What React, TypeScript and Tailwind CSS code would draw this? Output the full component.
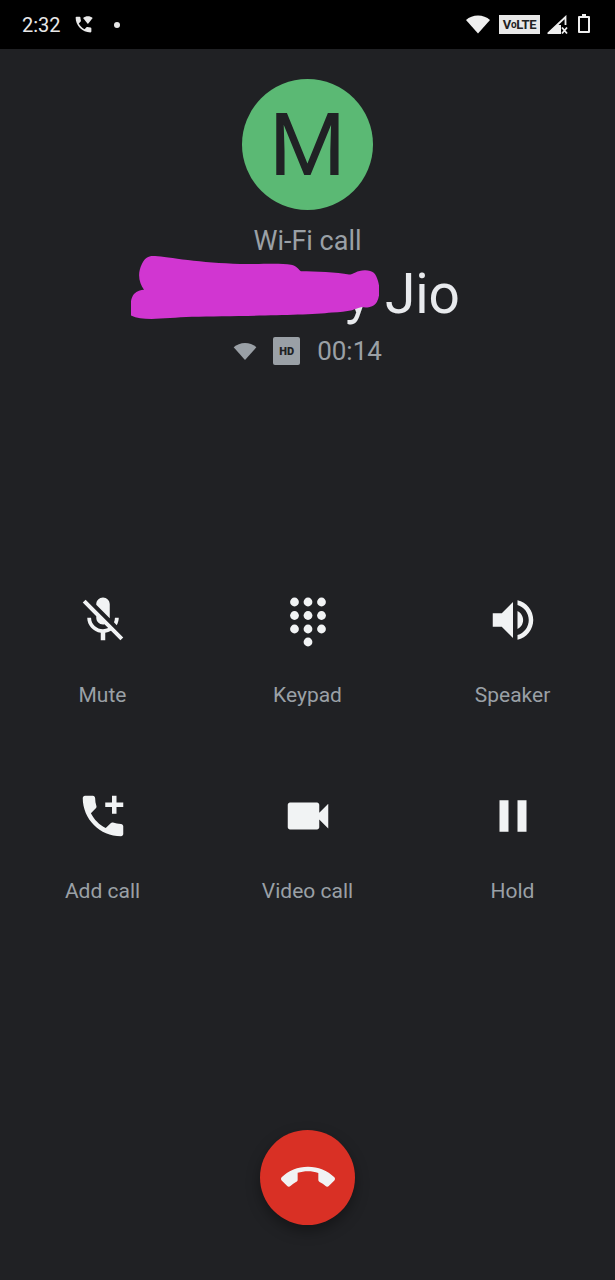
import React from 'react';

const font = "font-['Roboto',sans-serif]";

const MicOff = () => (
  <svg viewBox="0 0 24 24" className="h-[54px] w-[54px] fill-[#f1f3f4]">
    <path d="M19 11h-1.700c0 .74-.16 1.430-.43 2.050l1.230 1.230c.56-.98.9-2.090.9-3.280zm-4.020.17c0-.06.02-.11.02-.17V5c0-1.660-1.340-3-3-3S9 3.340 9 5v.18l5.980 5.990zM4.270 3L3 4.270l6.010 6.010V11c0 1.660 1.330 3 2.990 3 .22 0 .44-.03.65-.08l1.660 1.660c-.71.33-1.500.52-2.310.52-2.760 0-5.300-2.100-5.300-5.100H5c0 3.410 2.720 6.230 6 6.720V21h2v-3.280c.91-.13 1.770-.45 2.540-.9L19.730 21 21 19.730 4.270 3z" />
  </svg>
);

const Dialpad = () => (
  <svg viewBox="0 0 54 54" className="h-[54px] w-[54px] fill-[#f1f3f4]">
    {[9, 22.5, 36].map((y) =>
      [13.5, 27, 40.5].map((x) => <circle key={`${x}-${y}`} cx={x} cy={y} r="4.4" />),
    )}
    <circle cx="27" cy="49" r="4.4" />
  </svg>
);

const Speaker = () => (
  <svg viewBox="0 0 24 24" className="h-[54px] w-[54px] fill-[#f1f3f4]">
    <path d="M3 9v6h4l5 5V4L7 9H3zm13.500 3c0-1.770-1.020-3.290-2.500-4.030v8.050c1.480-.73 2.500-2.250 2.500-4.020zM14 3.230v2.060c2.890.86 5 3.540 5 6.710s-2.110 5.850-5 6.710v2.060c4.010-.91 7-4.490 7-8.770s-2.990-7.860-7-8.770z" />
  </svg>
);

const AddCall = () => (
  <svg viewBox="0 0 24 24" className="h-[54px] w-[54px] fill-[#f1f3f4]">
    <path d="M20 15.500c-1.250 0-2.450-.2-3.570-.57-.35-.11-.74-.03-1.020.24l-2.200 2.200c-2.830-1.440-5.150-3.750-6.590-6.590l2.200-2.210c.28-.26.36-.65.25-1C8.700 6.450 8.500 5.250 8.500 4c0-.55-.45-1-1-1H4c-.55 0-1 .45-1 1 0 9.390 7.610 17 17 17 .55 0 1-.45 1-1v-3.500c0-.55-.45-1-1-1zM21 6h-3V3h-2v3h-3v2h3v3h2V8h3z" />
  </svg>
);

const Videocam = () => (
  <svg viewBox="0 0 24 24" className="h-[54px] w-[54px] fill-[#f1f3f4]">
    <path d="M17 10.500V7c0-.55-.45-1-1-1H4c-.55 0-1 .45-1 1v10c0 .55.45 1 1 1h12c.55 0 1-.45 1-1v-3.500l4 4v-11l-4 4z" />
  </svg>
);

const Pause = () => (
  <svg viewBox="0 0 24 24" className="h-[54px] w-[54px] fill-[#f1f3f4]">
    <path d="M6 19h4V5H6v14zm8-14v14h4V5h-4z" />
  </svg>
);

const actions = [
  { label: 'Mute', icon: <MicOff /> },
  { label: 'Keypad', icon: <Dialpad /> },
  { label: 'Speaker', icon: <Speaker /> },
  { label: 'Add call', icon: <AddCall /> },
  { label: 'Video call', icon: <Videocam /> },
  { label: 'Hold', icon: <Pause /> },
];

const StatusBar = () => (
  <div className={`flex h-[49px] shrink-0 items-center justify-between bg-black pl-[22px] pr-[25px] ${font}`}>
    <div className="flex items-center">
      <span className="text-[20px] leading-none text-[#e8e8e8]">2:32</span>
      <svg viewBox="0 0 24 24" className="ml-[12px] h-[21px] w-[21px] fill-[#e8e8e8]">
        <path d="M20 15.500c-1.250 0-2.450-.2-3.570-.57-.35-.11-.74-.03-1.020.24l-2.200 2.200c-2.830-1.440-5.150-3.750-6.590-6.590l2.200-2.210c.28-.26.36-.65.25-1C8.700 6.450 8.500 5.250 8.500 4c0-.55-.45-1-1-1H4c-.55 0-1 .45-1 1 0 9.390 7.610 17 17 17 .55 0 1-.45 1-1v-3.500c0-.55-.45-1-1-1z" />
        <path d="M11.500 4.500C13 3.300 15 2.600 17 2.600s4 .7 5.500 1.900L17 11.500z" />
      </svg>
      <span className="ml-[20px] h-[6px] w-[6px] rounded-full bg-[#e8e8e8]" />
    </div>
    <div className="flex items-center">
      <svg viewBox="0 0 24 18" className="h-[19px] w-[24px] fill-[#efefef]">
        <path d="M12 18 0 4.500C3.200 1.700 7.400 0 12 0s8.800 1.700 12 4.500z" />
      </svg>
      <span className="ml-[9px] flex h-[19px] w-[41px] items-center justify-center bg-[#e8e8e8] text-[13px] font-bold leading-none tracking-[-0.3px] text-[#222]">
        V<span className="text-[10px]">o</span>LTE
      </span>
      <svg viewBox="0 0 22 20" className="ml-[7px] h-[20px] w-[22px]">
        <path d="M1 18.500 18.500 2v8" fill="none" stroke="#efefef" strokeWidth="1.800" />
        <path d="M0 19 10 10h4v9z" fill="#efefef" />
        <path d="M15 12.500l5 6M20 12.500l-5 6" stroke="#efefef" strokeWidth="1.800" />
      </svg>
      <span className="relative ml-[9px] h-[17px] w-[12px] rounded-[1px] border-2 border-[#efefef]">
        <span className="absolute left-[2px] top-[-4px] h-[2px] w-[4px] bg-[#efefef]" />
      </span>
    </div>
  </div>
);

const Hero = () => (
  <div className={`flex flex-col items-center pt-[30px] ${font}`}>
    <div className="flex h-[131px] w-[131px] items-center justify-center rounded-full bg-[#5bb974]">
      <span className="text-[88px] font-normal leading-none text-[#202124]">M</span>
    </div>
    <p className="mt-[16px] h-[30px] text-[27px] leading-[30px] text-[#9aa0a6]">Wi-Fi call</p>
    <div className="relative mt-[5px] flex h-[66px] w-[305px] items-center justify-end">
      <span className="text-[55px] leading-[66px] text-[#e8eaed]">y Jio</span>
      <svg
        viewBox="0 0 248 59"
        preserveAspectRatio="none"
        className="absolute left-[-24px] top-[-6px] h-[64px] w-[248px]"
      >
        <path
          d="M22 1c10 0 42 6 80 7 20 1 46-1 58 1 6 1 8 5 10 6 14 0 36 1 48 3 4 0 8-4 16-4 8 0 11 3 13 10 2 6 2 14-1 19-3 5-10 6-15 5-4 1-8 2-10 3-6 1-12 2-20 2-30 3-100 3-140 4-30 1-52 5-64-3C0 52-2 42 3 36c3-3 7-4 10-4-5-6-7-15-2-24 3-5 6-7 11-7z"
          fill="#d136d1"
        />
      </svg>
    </div>
    <div className="mt-[9px] flex items-center">
      <svg viewBox="0 0 24 18" className="h-[17px] w-[24px] fill-[#9aa0a6]">
        <path d="M12 18 0 4.500C3.200 1.700 7.400 0 12 0s8.800 1.700 12 4.500z" />
      </svg>
      <span className="ml-[16px] flex h-[28px] w-[27px] items-center justify-center rounded-[2px] bg-[#9aa0a6] text-[11px] font-black leading-none text-[#202124]">
        HD
      </span>
      <span className="ml-[17px] text-[26px] leading-[30px] text-[#9aa0a6]">00:14</span>
    </div>
  </div>
);

const ActionGrid = () => (
  <div className={`mt-[227px] grid grid-cols-3 gap-y-[80px] ${font}`}>
    {actions.map((a) => (
      <div key={a.label} className="flex flex-col items-center">
        {a.icon}
        <span className="mt-[34px] text-[21px] leading-[28px] text-[#9aa0a6]">{a.label}</span>
      </div>
    ))}
  </div>
);

export default function App() {
  return (
    <div className="flex h-[1280px] w-[615px] flex-col overflow-hidden bg-[#202124]">
      <StatusBar />
      <Hero />
      <ActionGrid />
      <div className="mt-auto flex justify-center pb-[55px]">
        <button className="flex h-[95px] w-[95px] items-center justify-center rounded-full bg-[#d93025] shadow-[0_6px_14px_rgba(0,0,0,0.35)]">
          <svg viewBox="0 0 24 24" className="h-[54px] w-[54px] fill-[#f1f3f4]">
            <path d="M12 9c-1.600 0-3.150.25-4.600.72v3.100c0 .39-.23.74-.56.900-.98.49-1.870 1.120-2.660 1.850-.18.18-.43.28-.7.28-.28 0-.53-.11-.71-.29L.29 13.080c-.18-.17-.29-.42-.29-.7 0-.28.11-.53.29-.71C3.340 8.780 7.460 7 12 7s8.660 1.780 11.710 4.670c.18.18.29.43.29.71 0 .28-.11.53-.29.71l-2.480 2.480c-.18.18-.43.29-.71.29-.27 0-.52-.11-.7-.28-.79-.74-1.690-1.360-2.670-1.850-.33-.16-.56-.5-.56-.9v-3.100C15.150 9.250 13.600 9 12 9z" />
          </svg>
        </button>
      </div>
    </div>
  );
}
